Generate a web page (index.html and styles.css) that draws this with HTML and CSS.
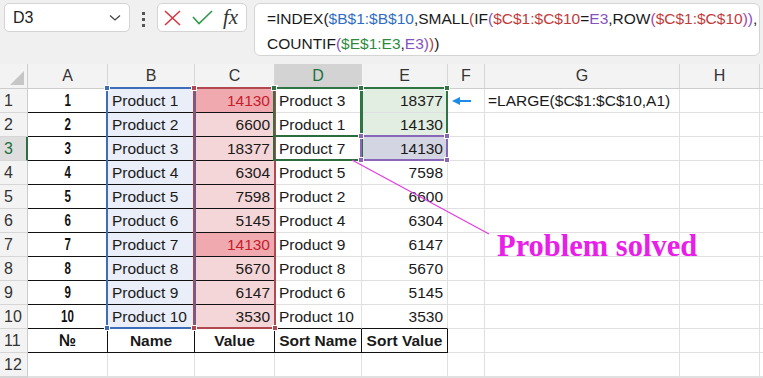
FILE: index.html
```html
<!DOCTYPE html>
<html lang="en">
<head>
    <meta charset="UTF-8">
    <title>Sort with LARGE and INDEX</title>
    <link rel="stylesheet" href="styles.css">
</head>
<body>
    <!-- Name box and formula bar -->
    <div class="topbar">
        <div class="namebox">
            <span>D3</span>
            <svg width="12" height="8" viewBox="0 0 12 8"><polyline points="1,1.5 6,6 11,1.5" fill="none" stroke="#444" stroke-width="1.3"/></svg>
        </div>
        <div class="dots"><i></i><i></i><i></i></div>
        <div class="fxbox">
            <svg class="icon-x" width="17" height="16" viewBox="0 0 17 16"><path d="M1 1 L16 15 M16 1 L1 15" stroke="#d9363e" stroke-width="1.6" fill="none"/></svg>
            <svg class="icon-ok" width="21" height="15" viewBox="0 0 21 15"><polyline points="1,7 7,13.5 20,1" stroke="#2f9a4a" stroke-width="1.6" fill="none"/></svg>
            <span class="fx">fx</span>
        </div>
        <div class="formula">=INDEX(<span class="r-b">$B$1:$B$10</span>,SMALL<span class="p-r">(</span>IF<span class="p-p">(</span><span class="r-r">$C$1:$C$10</span>=<span class="r-p">E3</span>,ROW<span class="p-m">(</span><span class="r-r">$C$1:$C$10</span><span class="p-m">)</span><span class="p-p">)</span>,<br>COUNTIF<span class="p-p">(</span><span class="r-g">$E$1:E3</span>,<span class="r-p">E3</span><span class="p-p">)</span><span class="p-r">)</span>)</div>
    </div>

    <!-- Worksheet -->
    <div class="sheet">
        <div class="grid">
            <div class="corner"><span class="tri"></span></div>
            <div class="ch">A</div><div class="ch">B</div><div class="ch">C</div><div class="ch sel">D</div>
            <div class="ch">E</div><div class="ch">F</div><div class="ch">G</div><div class="ch">H</div><div class="ch end"></div>

            <div class="rh">1</div><div class="c num b"><span>1</span></div><div class="c name fb b">Product 1</div><div class="c val fc2 b">14130</div>
            <div class="c name">Product 3</div><div class="c val fe">18377</div><div class="c"></div>
            <div class="c note">=LARGE($C$1:$C$10,A1)</div><div class="c"></div><div class="c end"></div>

            <div class="rh">2</div><div class="c num b"><span>2</span></div><div class="c name fb b">Product 2</div><div class="c val fc b">6600</div>
            <div class="c name">Product 1</div><div class="c val fe">14130</div><div class="c"></div><div class="c"></div><div class="c"></div><div class="c end"></div>

            <div class="rh sel">3</div><div class="c num b"><span>3</span></div><div class="c name fb b">Product 3</div><div class="c val fc b">18377</div>
            <div class="c name">Product 7</div><div class="c val fp">14130</div><div class="c"></div><div class="c"></div><div class="c"></div><div class="c end"></div>

            <div class="rh">4</div><div class="c num b"><span>4</span></div><div class="c name fb b">Product 4</div><div class="c val fc b">6304</div>
            <div class="c name">Product 5</div><div class="c val">7598</div><div class="c"></div><div class="c"></div><div class="c"></div><div class="c end"></div>

            <div class="rh">5</div><div class="c num b"><span>5</span></div><div class="c name fb b">Product 5</div><div class="c val fc b">7598</div>
            <div class="c name">Product 2</div><div class="c val">6600</div><div class="c"></div><div class="c"></div><div class="c"></div><div class="c end"></div>

            <div class="rh">6</div><div class="c num b"><span>6</span></div><div class="c name fb b">Product 6</div><div class="c val fc b">5145</div>
            <div class="c name">Product 4</div><div class="c val">6304</div><div class="c"></div><div class="c"></div><div class="c"></div><div class="c end"></div>

            <div class="rh">7</div><div class="c num b"><span>7</span></div><div class="c name fb b">Product 7</div><div class="c val fc2 b">14130</div>
            <div class="c name">Product 9</div><div class="c val">6147</div><div class="c"></div><div class="c"></div><div class="c"></div><div class="c end"></div>

            <div class="rh">8</div><div class="c num b"><span>8</span></div><div class="c name fb b">Product 8</div><div class="c val fc b">5670</div>
            <div class="c name">Product 8</div><div class="c val">5670</div><div class="c"></div><div class="c"></div><div class="c"></div><div class="c end"></div>

            <div class="rh">9</div><div class="c num b"><span>9</span></div><div class="c name fb b">Product 9</div><div class="c val fc b">6147</div>
            <div class="c name">Product 6</div><div class="c val">5145</div><div class="c"></div><div class="c"></div><div class="c"></div><div class="c end"></div>

            <div class="rh">10</div><div class="c num b"><span>10</span></div><div class="c name fb b">Product 10</div><div class="c val fc b">3530</div>
            <div class="c name b">Product 10</div><div class="c val b">3530</div><div class="c"></div><div class="c"></div><div class="c"></div><div class="c end"></div>

            <div class="rh">11</div><div class="c num head"><span class="wide">№</span></div><div class="c head">Name</div><div class="c head">Value</div>
            <div class="c head">Sort Name</div><div class="c head">Sort Value</div><div class="c"></div><div class="c"></div><div class="c"></div><div class="c end"></div>

            <div class="rh">12</div><div class="c"></div><div class="c"></div><div class="c"></div><div class="c"></div>
            <div class="c"></div><div class="c"></div><div class="c"></div><div class="c"></div><div class="c end"></div>

            <div class="rh"></div><div class="c"></div><div class="c"></div><div class="c"></div><div class="c"></div>
            <div class="c"></div><div class="c"></div><div class="c"></div><div class="c"></div><div class="c end"></div>
        </div>

        <!-- Range highlights drawn over the cells -->
        <div class="range blue r-names"><i class="tl"></i><i class="bl"></i></div>
        <div class="range red r-values"><i class="tl"></i><i class="tr"></i><i class="bl"></i><i class="br"></i></div>
        <div class="range green r-d12"><i class="tl"></i><i class="tr"></i></div>
        <div class="range green r-e12"><i class="tl"></i><i class="tr"></i></div>
        <div class="cursor"></div>
        <div class="range purple r-e3"><i class="tl"></i><i class="tr"></i><i class="bl"></i><i class="br"></i></div>

        <svg class="marks" width="763" height="314" viewBox="0 0 763 314">
            <line x1="352" y1="96" x2="489" y2="170" stroke="#e23ce2" stroke-width="1.2"/>
            <line x1="458" y1="37" x2="471" y2="37" stroke="#1e8ce6" stroke-width="2"/>
            <polygon points="452,37 460,33 460,41" fill="#1e8ce6"/>
        </svg>
        <div class="solved">Problem solved</div>
    </div>
</body>
</html>
```

FILE: styles.css
```css
/* Page */
body {
    margin: 0;
    width: 763px;
    height: 378px;
    overflow: hidden;
    background-color: #ffffff;
    font-family: "Liberation Sans", Arial, sans-serif;
    color: #1a1a1a;
}

/* Formula bar */
.topbar {
    height: 64px;
    box-sizing: border-box;
    padding: 3px 0 0 4px;
    background-color: #f0f0f0;
    display: flex;
    align-items: flex-start;
}

.namebox {
    width: 126px;
    height: 29px;
    box-sizing: border-box;
    padding: 0 8px 0 8px;
    background-color: #fff;
    border: 1px solid #d4d4d4;
    border-radius: 5px;
    display: flex;
    align-items: center;
    justify-content: space-between;
    font-size: 16px;
    color: #222;
}

.dots {
    width: 27px;
    padding-top: 9px;
    display: flex;
    flex-direction: column;
    align-items: center;
    gap: 3px;
}

.dots i {
    width: 3px;
    height: 3px;
    background-color: #555;
}

.fxbox {
    width: 90px;
    height: 29px;
    box-sizing: border-box;
    padding-left: 6px;
    background-color: #fff;
    border: 1px solid #d4d4d4;
    border-radius: 5px;
    display: flex;
    align-items: center;
}

.icon-ok {
    margin-left: 11px;
}

.fx {
    margin-left: 10px;
    font-family: "Liberation Serif", "Times New Roman", serif;
    font-style: italic;
    font-size: 21px;
    color: #333;
    line-height: 1;
}

.formula {
    margin-left: 7px;
    width: 506px;
    height: 53px;
    box-sizing: border-box;
    padding: 2px 12px 0 12px;
    background-color: #fff;
    border: 1px solid #d4d4d4;
    border-radius: 6px;
    font-size: 15.5px;
    line-height: 25px;
    white-space: nowrap;
}

/* colours of references and brackets in the formula */
.r-b { color: #2f6cc4; }
.r-r { color: #c23b3b; }
.r-p { color: #8552c0; }
.r-g { color: #2d8a3c; }
.p-r { color: #b0453c; }
.p-p { color: #8552c0; }
.p-m { color: #a8449e; }

/* Worksheet grid */
.sheet {
    position: relative;
}

.grid {
    display: grid;
    grid-template-columns: 28px 80px 87px 80px 87px 86px 37px 195px 80px 3px;
    grid-template-rows: 25px repeat(12, 24px) 1px;
    font-size: 15.5px;
}

.grid > div {
    box-sizing: border-box;
    border-right: 1px solid #e0e0e0;
    border-bottom: 1px solid #e0e0e0;
    white-space: nowrap;
    overflow: hidden;
}

.corner {
    position: relative;
    background-color: #f3f3f3;
}

.grid > .corner {
    border-right-color: #cdcdcd;
    border-bottom-color: #cdcdcd;
}

.tri {
    position: absolute;
    right: 3px;
    bottom: 3px;
    width: 0;
    height: 0;
    border-left: 14px solid transparent;
    border-bottom: 14px solid #c6c6c6;
}

.ch,
.rh {
    background-color: #f3f3f3;
    color: #333;
    display: flex;
    align-items: center;
    justify-content: center;
}

.grid > .ch {
    border-right-color: #d6d6d6;
    border-bottom-color: #cdcdcd;
    font-size: 16px;
}

.grid > .rh {
    border-right-color: #cdcdcd;
    border-bottom-color: #d6d6d6;
    justify-content: flex-start;
    padding-left: 4px;
    font-size: 16px;
}

.grid > .ch.sel {
    background-color: #d3d3d3;
    color: #22703e;
    border-bottom: 2px solid #2a7040;
}

.grid > .rh.sel {
    background-color: #dedede;
    color: #22703e;
    border-right: 2px solid #2a7040;
}

.grid > .end {
    border-right: none;
}

/* Cells */
.c {
    display: flex;
    align-items: center;
    padding: 0 4px;
}

.num {
    justify-content: center;
    font-weight: bold;
    font-size: 17px;
    color: #111;
}

/* narrow bold digits, like Aptos Narrow */
.num span {
    display: inline-block;
    transform: scaleX(0.68);
}

.num span.wide {
    transform: scaleX(0.9);
}

.val {
    justify-content: flex-end;
}

.note {
    padding-left: 3px;
}

.grid > .b {
    border-bottom-color: #111;
}

.grid > .head {
    justify-content: center;
    font-weight: bold;
    border-bottom-color: #111;
    border-right-color: #111;
}

/* Fills */
.fb { background-color: #e9eef8; }
.fc { background-color: #f5d6d8; }
.fc2 { background-color: #f0a9ae; color: #c4202c; }
.fe { background-color: #e3eee2; }
.fp { background-color: #d4d5e2; }

/* Coloured range borders */
.range,
.cursor {
    position: absolute;
    box-sizing: border-box;
    border: 2px solid;
}

.range i {
    position: absolute;
    width: 6px;
    height: 6px;
    box-sizing: border-box;
    border: 1px solid #fff;
}

.range .tl { left: -4px; top: -4px; }
.range .tr { right: -4px; top: -4px; }
.range .bl { left: -4px; bottom: -4px; }
.range .br { right: -4px; bottom: -4px; }

.blue { border-color: #3d6cb8; }
.blue i { background-color: #3d6cb8; }
.red { border-color: #b14850; }
.red i { background-color: #b14850; }
.green { border-color: #2f7443; }
.green i { background-color: #2f7443; }
.purple { border-color: #8a66b8; }
.purple i { background-color: #8a66b8; }

.r-names { left: 106px; top: 23px; width: 90px; height: 242px; }
.r-values { left: 193px; top: 23px; width: 83px; height: 242px; }
.r-d12 { left: 273px; top: 23px; width: 90px; height: 50px; }
.r-e12 { left: 360px; top: 23px; width: 88px; height: 50px; }
.r-e3 { left: 360px; top: 71px; width: 88px; height: 26px; }

.cursor {
    left: 273px;
    top: 71px;
    width: 90px;
    height: 26px;
    border-color: #2a6e3e;
}

/* Annotation */
.marks {
    position: absolute;
    left: 0;
    top: 0;
}

.solved {
    position: absolute;
    left: 497px;
    top: 167px;
    font-family: "Liberation Serif", "Times New Roman", serif;
    font-weight: bold;
    font-size: 30.5px;
    line-height: 30px;
    color: #e91ee9;
}
```
